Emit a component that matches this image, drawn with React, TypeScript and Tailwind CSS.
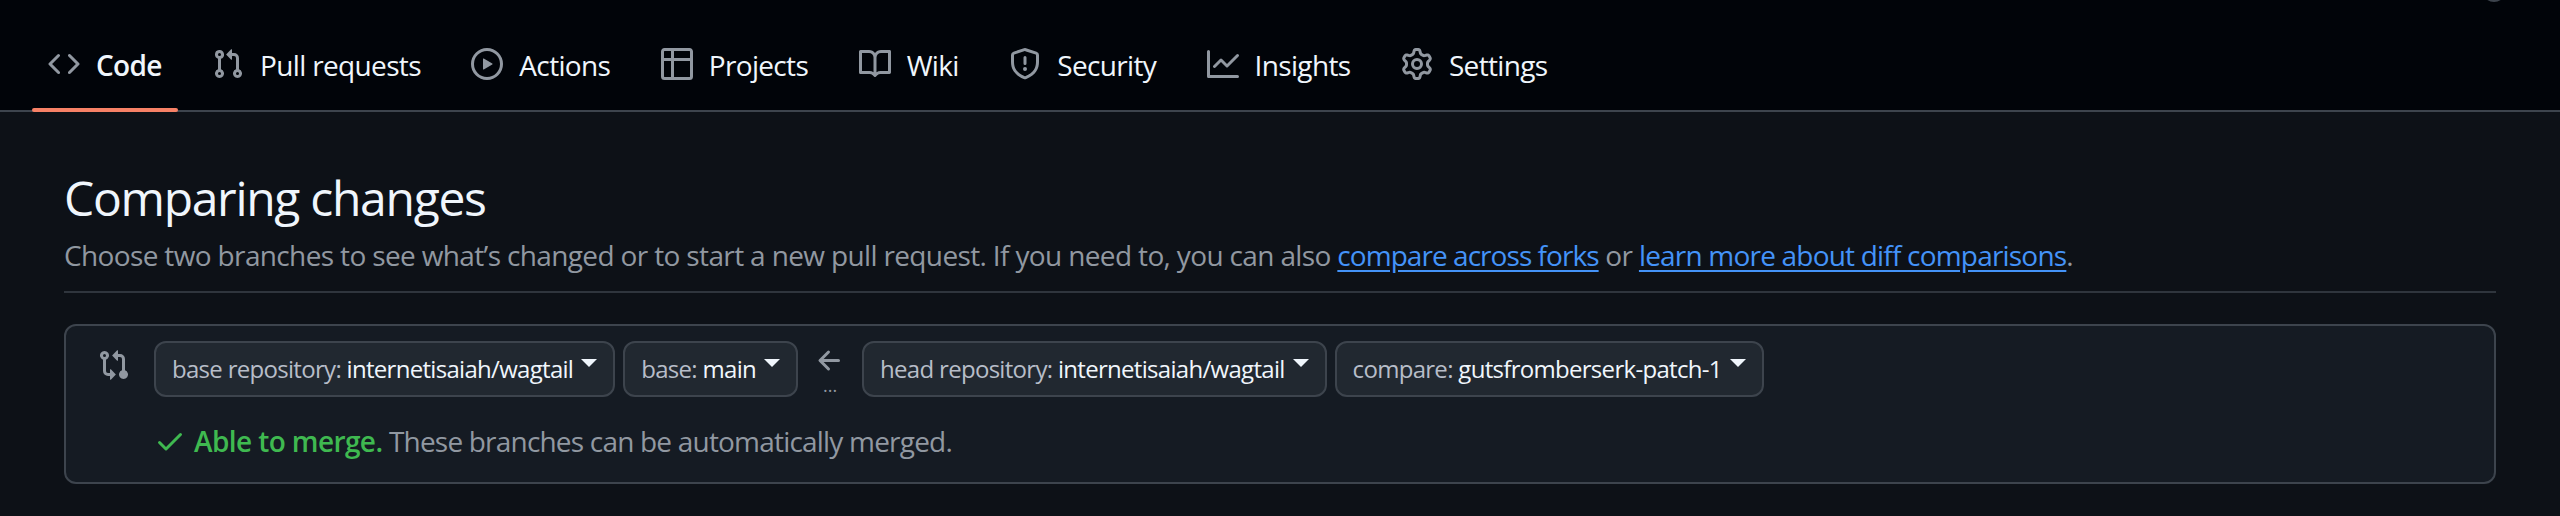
import React from 'react';

const icons = {
  code: 'm11.28 3.22 4.25 4.25a.75.75 0 0 1 0 1.06l-4.25 4.25a.749.749 0 0 1-1.275-.326.749.749 0 0 1 .215-.734L13.94 8l-3.72-3.72a.749.749 0 0 1 .326-1.275.749.749 0 0 1 .734.215Zm-6.56 0a.751.751 0 0 1 1.042.018.751.751 0 0 1 .018 1.042L2.06 8l3.72 3.72a.749.749 0 0 1-.326 1.275.749.749 0 0 1-.734-.215L.47 8.53a.75.75 0 0 1 0-1.06Z',
  pull: 'M1.5 3.25a2.25 2.25 0 1 1 3 2.122v5.256a2.251 2.251 0 1 1-1.5 0V5.372A2.25 2.25 0 0 1 1.5 3.25Zm5.677-.177L9.573.677A.25.25 0 0 1 10 .854V2.5h1A2.5 2.5 0 0 1 13.5 5v5.628a2.251 2.251 0 1 1-1.5 0V5a1 1 0 0 0-1-1h-1v1.646a.25.25 0 0 1-.427.177L7.177 3.427a.25.25 0 0 1 0-.354ZM3.75 2.5a.75.75 0 1 0 0 1.5.75.75 0 0 0 0-1.5Zm0 9.5a.75.75 0 1 0 0 1.5.75.75 0 0 0 0-1.5Zm8.25.75a.75.75 0 1 0 1.5 0 .75.75 0 0 0-1.5 0Z',
  play: 'M8 0a8 8 0 1 1 0 16A8 8 0 0 1 8 0ZM1.5 8a6.5 6.5 0 1 0 13 0 6.5 6.5 0 0 0-13 0Zm4.879-2.773 4.264 2.559a.25.25 0 0 1 0 .428l-4.264 2.559A.25.25 0 0 1 6 10.559V5.442a.25.25 0 0 1 .379-.215Z',
  table: 'M0 1.75C0 .784.784 0 1.75 0h12.5C15.216 0 16 .784 16 1.75v12.5A1.75 1.75 0 0 1 14.25 16H1.75A1.75 1.75 0 0 1 0 14.25ZM6.5 6.5v8h7.75a.25.25 0 0 0 .25-.25V6.5Zm8-1.5V1.75a.25.25 0 0 0-.25-.25H6.5V5Zm-13 1.5v7.75c0 .138.112.25.25.25H5v-8ZM5 5V1.5H1.75a.25.25 0 0 0-.25.25V5Z',
  book: 'M0 1.75A.75.75 0 0 1 .75 1h4.253c1.227 0 2.317.59 3 1.501A3.743 3.743 0 0 1 11.006 1h4.245a.75.75 0 0 1 .75.75v10.5a.75.75 0 0 1-.75.75h-4.507a2.25 2.25 0 0 0-1.591.659l-.622.621a.75.75 0 0 1-1.06 0l-.622-.621A2.25 2.25 0 0 0 5.258 13H.75a.75.75 0 0 1-.75-.75Zm7.251 10.324.004-5.073-.002-2.253A2.25 2.25 0 0 0 5.003 2.5H1.5v9h3.757a3.75 3.75 0 0 1 1.994.574ZM8.755 4.75l-.004 7.322a3.752 3.752 0 0 1 1.992-.572H14.5v-9h-3.495a2.25 2.25 0 0 0-2.25 2.25Z',
  shield: 'M7.467.133a1.748 1.748 0 0 1 1.066 0l5.25 1.68A1.75 1.75 0 0 1 15 3.48V7c0 1.566-.32 3.182-1.303 4.682-.983 1.498-2.585 2.813-5.032 3.855a1.697 1.697 0 0 1-1.33 0c-2.447-1.042-4.049-2.357-5.032-3.855C1.32 10.182 1 8.566 1 7V3.48a1.75 1.75 0 0 1 1.217-1.667Zm.61 1.429a.25.25 0 0 0-.153 0l-5.25 1.68a.25.25 0 0 0-.174.238V7c0 1.358.275 2.666 1.057 3.86.784 1.194 2.121 2.34 4.366 3.297a.196.196 0 0 0 .154 0c2.245-.956 3.582-2.104 4.366-3.298C13.225 9.666 13.5 8.36 13.5 7V3.48a.251.251 0 0 0-.174-.237l-5.25-1.68ZM8.75 4.75v3a.75.75 0 0 1-1.5 0v-3a.75.75 0 0 1 1.5 0ZM9 10.5a1 1 0 1 1-2 0 1 1 0 0 1 2 0Z',
  graph: 'M1.5 1.75V13.5h13.75a.75.75 0 0 1 0 1.5H.75a.75.75 0 0 1-.75-.75V1.75a.75.75 0 0 1 1.5 0Zm14.28 2.53-5.25 5.25a.75.75 0 0 1-1.06 0L7 7.06 4.28 9.78a.751.751 0 0 1-1.042-.018.751.751 0 0 1-.018-1.042l3.25-3.25a.75.75 0 0 1 1.06 0L10 7.94l4.72-4.72a.751.751 0 0 1 1.042.018.751.751 0 0 1 .018 1.042Z',
  gear: 'M8 0a8.2 8.2 0 0 1 .701.031C9.444.095 9.99.645 10.16 1.29l.288 1.107c.018.066.079.158.212.224.231.114.454.243.668.386.123.082.233.09.299.071l1.103-.303c.644-.176 1.392.021 1.82.63.27.385.506.792.704 1.218.315.675.111 1.422-.364 1.891l-.814.806c-.049.048-.098.147-.088.294.016.257.016.515 0 .772-.01.147.038.246.088.294l.814.806c.475.469.679 1.216.364 1.891a7.977 7.977 0 0 1-.704 1.217c-.428.61-1.176.807-1.82.63l-1.102-.302c-.067-.019-.177-.011-.3.071a5.909 5.909 0 0 1-.668.386c-.133.066-.194.158-.211.224l-.29 1.106c-.168.646-.715 1.196-1.458 1.26a8.006 8.006 0 0 1-1.402 0c-.743-.064-1.289-.614-1.458-1.26l-.289-1.106c-.018-.066-.079-.158-.212-.224a5.738 5.738 0 0 1-.668-.386c-.123-.082-.233-.09-.299-.071l-1.103.303c-.644.176-1.392-.021-1.82-.63a8.12 8.12 0 0 1-.704-1.218c-.315-.675-.111-1.422.363-1.891l.815-.806c.05-.048.098-.147.088-.294a6.214 6.214 0 0 1 0-.772c.01-.147-.038-.246-.088-.294l-.815-.806C.635 6.045.431 5.298.746 4.623a7.92 7.92 0 0 1 .704-1.217c.428-.61 1.176-.807 1.82-.63l1.102.302c.067.019.177.011.3-.071.214-.143.437-.272.668-.386.133-.066.194-.158.211-.224l.29-1.106C6.009.645 6.556.095 7.299.03 7.53.01 7.764 0 8 0Zm-.571 1.525c-.036.003-.108.036-.137.146l-.289 1.105c-.147.561-.549.967-.998 1.189-.173.086-.34.183-.5.29-.417.278-.97.423-1.529.27l-1.103-.303c-.109-.03-.175.016-.195.045-.22.312-.412.644-.573.99-.014.031-.021.11.059.19l.815.806c.411.406.562.957.53 1.456a4.709 4.709 0 0 0 0 .582c.032.499-.119 1.05-.53 1.456l-.815.806c-.081.08-.073.159-.059.19.162.346.353.677.573.989.02.03.085.076.195.046l1.102-.303c.56-.153 1.113-.008 1.53.27.161.107.328.204.501.29.447.222.85.629.997 1.189l.289 1.105c.029.109.101.143.137.146a6.6 6.6 0 0 0 1.142 0c.036-.003.108-.036.137-.146l.289-1.105c.147-.561.549-.967.998-1.189.173-.086.34-.183.5-.29.417-.278.97-.423 1.529-.27l1.103.303c.109.029.175-.016.195-.045.22-.313.411-.644.573-.99.014-.031.021-.11-.059-.19l-.815-.806c-.411-.406-.562-.957-.53-1.456a4.709 4.709 0 0 0 0-.582c-.032-.499.119-1.05.53-1.456l.815-.806c.081-.08.073-.159.059-.19a6.464 6.464 0 0 0-.573-.989c-.02-.03-.085-.076-.195-.046l-1.102.303c-.56.153-1.113.008-1.53-.27a4.44 4.44 0 0 0-.501-.29c-.447-.222-.85-.629-.997-1.189l-.289-1.105c-.029-.11-.101-.143-.137-.146a6.6 6.6 0 0 0-1.142 0ZM11 8a3 3 0 1 1-6 0 3 3 0 0 1 6 0ZM9.5 8a1.5 1.5 0 1 0-3.001.001A1.5 1.5 0 0 0 9.5 8Z',
  compare: 'M9.573.677 7.177 3.073a.25.25 0 0 0 0 .354l2.396 2.396A.25.25 0 0 0 10 5.646V4h1a1 1 0 0 1 1 1v5.628a2.251 2.251 0 1 0 1.5 0V5A2.5 2.5 0 0 0 11 2.5h-1V.854a.25.25 0 0 0-.427-.177ZM6 12v-1.646a.25.25 0 0 1 .427-.177l2.396 2.396a.25.25 0 0 1 0 .354l-2.396 2.396A.25.25 0 0 1 6 15.146V13.5H5A2.5 2.5 0 0 1 2.5 11V5.372a2.25 2.25 0 1 1 1.5 0V11a1 1 0 0 0 1 1ZM4 3.25a.75.75 0 1 0-1.5 0 .75.75 0 0 0 1.5 0ZM12.75 12a.75.75 0 1 0 0 1.5.75.75 0 0 0 0-1.5Z',
  check: 'M13.78 4.22a.75.75 0 0 1 0 1.06l-7.25 7.25a.75.75 0 0 1-1.06 0L2.22 9.28a.751.751 0 0 1 .018-1.042.751.751 0 0 1 1.042-.018L6 10.94l6.72-6.72a.75.75 0 0 1 1.06 0Z',
  arrow: 'M7.78 12.53a.75.75 0 0 1-1.06 0L2.47 8.28a.75.75 0 0 1 0-1.06l4.25-4.25a.751.751 0 0 1 1.042.018.751.751 0 0 1 .018 1.042L4.81 7h7.44a.75.75 0 0 1 0 1.5H4.81l2.97 2.97a.75.75 0 0 1 0 1.06Z',
};

const Octicon = ({ d, className }: { d: string; className: string }) => (
  <svg viewBox="0 0 16 16" fill="currentColor" className={className}>
    <path d={d} />
  </svg>
);

const tabs = [
  { label: 'Code', icon: icons.code, active: true },
  { label: 'Pull requests', icon: icons.pull },
  { label: 'Actions', icon: icons.play },
  { label: 'Projects', icon: icons.table },
  { label: 'Wiki', icon: icons.book },
  { label: 'Security', icon: icons.shield },
  { label: 'Insights', icon: icons.graph },
  { label: 'Settings', icon: icons.gear },
];

const RefButton = ({ label, value }: { label: string; value: string }) => (
  <div className="flex h-14 items-center rounded-xl border-2 border-[#3d444d] bg-[#212830] px-4">
    <span className="text-[#b7bdc8]">{label}&nbsp;</span>
    <span className="text-[#f0f6fc]">{value}</span>
    <span className="ml-2 mb-3 h-0 w-0 border-x-8 border-t-8 border-x-transparent border-t-[#f0f6fc]"></span>
  </div>
);

export default function App() {
  return (
    <div className="relative h-[516px] overflow-hidden bg-[#0d1117] font-['Open_Sans',sans-serif]">
      {/* Top nav */}
      <div className="flex h-[112px] items-end gap-[18.5px] border-b-2 border-[#3d444d] bg-[#010409] px-8 tracking-[-0.66px]">
        {tabs.map((tab) => (
          <div key={tab.label} className={`relative flex h-[78px] items-start gap-4 px-4 pt-[17px] text-[28px] leading-8 ${tab.active ? 'font-semibold tracking-[-0.7px]' : ''} text-[#f0f6fc]`}>
            <Octicon d={tab.icon} className="-mt-[1px] h-8 w-8 shrink-0 text-[#9198a1]" />
            <span>{tab.label}</span>
            {tab.active && <span className="absolute -bottom-[2px] left-0 right-0 h-1 rounded-sm bg-[#f78166]"></span>}
          </div>
        ))}
      </div>
      <div className="absolute -top-[22px] left-[2482px] h-6 w-6 rounded-full bg-[#3d444d]"></div>

      <div className="px-16 pt-[56px]">
        <h1 className="text-[48px] leading-[60px] font-normal tracking-[-1.3px] text-[#f0f6fc]">Comparing changes</h1>
        <p className="mt-[6px] border-b-2 border-[#2f353d] pb-[15px] text-[28px] leading-[42px] tracking-[-0.64px] text-[#9198a1]">
          Choose two branches to see what’s changed or to start a new pull request. If you need to, you can also{' '}
          <a className="tracking-[-0.95px] text-[#4493f8] underline underline-offset-[4px]">compare across forks</a> or{' '}
          <a className="tracking-[-0.8px] text-[#4493f8] underline underline-offset-[4px]">learn more about diff comparisons</a>.
        </p>

        <div className="mt-[31px] flex h-[160px] rounded-xl border-2 border-[#3d444d] bg-[#151b23] pt-[15px] pl-8">
          <Octicon d={icons.compare} className="mt-2 h-8 w-8 shrink-0 text-[#9198a1]" />
          <div className="ml-6">
            <div className="flex items-center gap-2 text-[24px] tracking-[-0.7px]">
              <RefButton label="base repository:" value="internetisaiah/wagtail" />
              <RefButton label="base:" value="main" />
              <div className="mx-2 flex w-8 flex-col items-center text-[#9198a1]">
                <Octicon d={icons.arrow} className="h-8 w-8" />
                <span className="text-[18px] leading-4 tracking-normal">...</span>
              </div>
              <RefButton label="head repository:" value="internetisaiah/wagtail" />
              <RefButton label="compare:" value="gutsfromberserk-patch-1" />
            </div>
            <div className="mt-[24px] flex items-center text-[28px] leading-10">
              <Octicon d={icons.check} className="mr-2 h-8 w-8 text-[#3fb950]" />
              <span className="font-semibold tracking-[-0.6px] text-[#3fb950]">Able to merge.</span>
              <span className="tracking-[-0.8px] text-[#9198a1]">&nbsp;These branches can be automatically merged.</span>
            </div>
          </div>
        </div>
      </div>
    </div>
  );
}
